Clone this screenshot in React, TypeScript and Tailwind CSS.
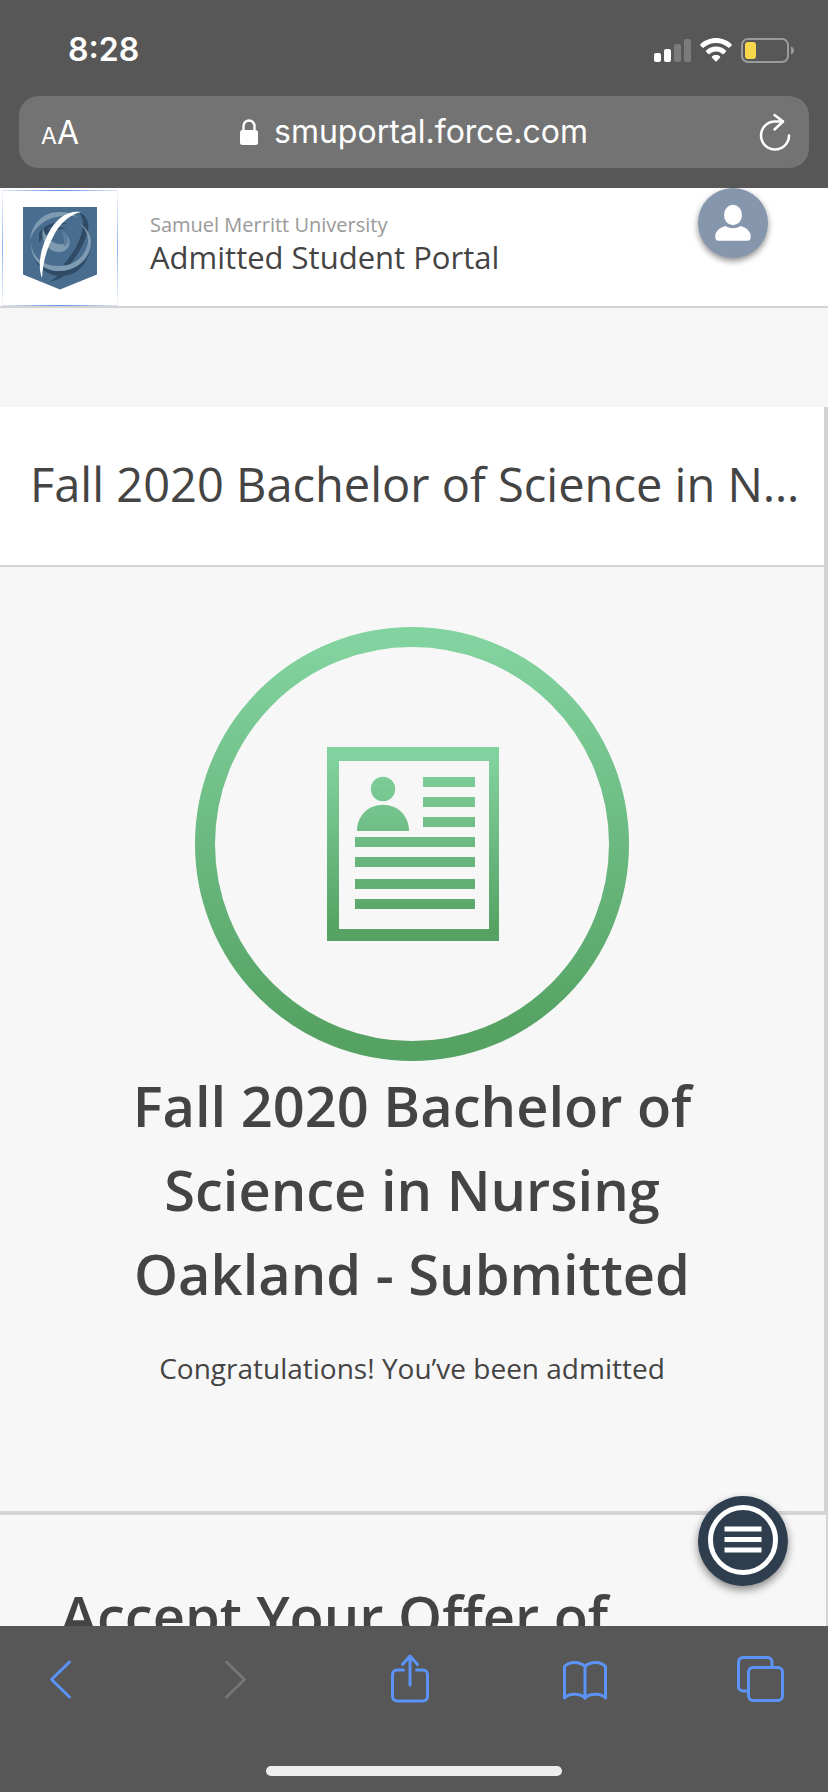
import type { ReactNode } from 'react';

const signalBars = [
    { x: 0, height: 9, on: true },
    { x: 10, height: 13, on: true },
    { x: 20, height: 18, on: false },
    { x: 30, height: 23, on: false },
];

function StatusBar() {
    return (
        <div className="flex h-24 items-center justify-between pt-1 pr-[33px] pl-[68px]">
            <time className="text-[32px] leading-9 font-semibold">8:28</time>
            <div className="flex items-center gap-[9px]">
                <svg width="37" height="23" viewBox="0 0 37 23" aria-label="Signal">
                    {signalBars.map((b) => (
                        <rect
                            key={b.x}
                            x={b.x}
                            y={23 - b.height}
                            width="7"
                            height={b.height}
                            rx="2"
                            fill={b.on ? '#ffffff' : '#7b7b7b'}
                        />
                    ))}
                </svg>
                <svg width="32" height="24" viewBox="0 0 32 24" fill="#ffffff" aria-label="Wi-Fi">
                    <path d="M16 0C22 0 27.500 2.300 31.600 6.200c.4.400.4.900 0 1.300l-2 2.100c-.4.400-.9.400-1.300 0A18 18 0 0 0 16 4.900 18 18 0 0 0 3.700 9.600c-.4.400-.9.400-1.300 0l-2-2.100c-.4-.4-.4-.9 0-1.300C4.500 2.300 10 0 16 0Z" />
                    <path d="M16 8.600c3.800 0 7.200 1.400 9.900 3.800.4.400.4.900 0 1.300l-2.200 2.200c-.4.400-.9.400-1.300 0A9.600 9.600 0 0 0 16 13.500c-2.500 0-4.700.9-6.400 2.400-.4.400-.9.400-1.300 0l-2.200-2.200c-.4-.4-.4-.9 0-1.300A14.800 14.800 0 0 1 16 8.600Z" />
                    <path d="M16 17.100c1.500 0 2.900.5 4 1.400.4.400.4.800 0 1.200l-3.400 3.500c-.4.400-.8.400-1.200 0L12 19.700c-.4-.4-.4-.8 0-1.200 1.100-.9 2.500-1.400 4-1.400Z" />
                </svg>
                <svg width="54" height="25" viewBox="0 0 54 25" aria-label="Battery">
                    <rect x="1" y="1" width="46" height="23" rx="6" fill="none" stroke="#9b9b9b" strokeWidth="2" />
                    <rect x="4" y="4" width="11" height="17" rx="3" fill="#f7d64b" />
                    <path d="M50 8.500c1.900.6 3 2.200 3 4s-1.100 3.400-3 4Z" fill="#9b9b9b" />
                </svg>
            </div>
        </div>
    );
}

function AddressBar() {
    return (
        <div className="mx-[19px] mb-5 flex h-[72px] items-center justify-between rounded-[20px] bg-[#737373] pr-[18px] pl-[22px]">
            <button type="button" aria-label="Text size" className="flex w-7 items-baseline pt-1">
                <span className="text-[23px] leading-10">A</span>
                <span className="text-[32px] leading-10">A</span>
            </button>
            <button type="button" className="flex items-center gap-4">
                <svg width="18" height="26" viewBox="0 0 18 26" aria-hidden="true">
                    <path d="M3.500 12V7a5.500 5.500 0 0 1 11 0v5" fill="none" stroke="#ffffff" strokeWidth="2.400" />
                    <rect y="11" width="18" height="15" rx="2.500" fill="#ffffff" />
                </svg>
                <span className="text-[32px] leading-10">smuportal.force.com</span>
            </button>
            <button type="button" aria-label="Reload">
                <svg
                    width="32"
                    height="38"
                    viewBox="0 0 32 38"
                    fill="none"
                    stroke="#ffffff"
                    strokeWidth="2.500"
                    strokeLinecap="round"
                    strokeLinejoin="round"
                >
                    <path d="M30 22.500a14 14 0 1 1-14-14h8" />
                    <path d="m15.500 2 8.500 6.500-8.500 8" />
                </svg>
            </button>
        </div>
    );
}

function ShieldLogo() {
    return (
        <svg width="74" height="83" viewBox="0 0 74 83" aria-hidden="true">
            <path d="M0 0h74v67.500L37 82.500 0 67.500Z" fill="#486d8e" />
            <path d="M56 5c9 4 12 13 7 25-4 11-10 20-18 30l-5-2c8-9 14-18 17-27 4-11 4-19-1-26Z" fill="#2f4b66" />
            <path d="M67 36c1 18-12 33-29 33-12 0-22-7-27-18 7 10 16 14 27 13 15-1 26-12 29-28Z" fill="#2f4b66" />
            <path d="M16 26c6-9 18-13 29-9-8 0-16 1-21 6 8-3 14-3 20-1-12-1-22 4-28 14Z" fill="#2f4b66" />
            <path d="M26 75c8-2 13-4 18-9l-6-1c-3 4-7 7-12 10Z" fill="#2f4b66" />
            <path d="M7 33C9 15 22 4 38 5c7 0 12 2 17 5-8-2-15-2-22 0C20 13 11 21 7 33Z" fill="#7f9bb1" />
            <path d="M8 37c2 14 13 22 27 22 17 0 28-10 30-24 0-8-3-14-9-19 8 5 12 12 12 20-1 16-14 28-32 28C20 64 8 53 8 37Z" fill="#7f9bb1" />
            <path d="M20 21c-3 13 5 24 16 24 9 0 13-8 9-16 0 6-4 9-9 8-8-1-14-7-16-16Z" fill="#7f9bb1" />
            <path d="M38 24c5 1 8 5 7 11-1 3-3 4-5 4 2-5 1-10-2-15Z" fill="#5d7f9c" />
            <path d="M58 5C45 3 33 11 25 27c-7 14-11 31-6 44 1-15 4-28 11-41C37 16 46 8 58 5Z" fill="#ffffff" />
        </svg>
    );
}

function PortalHeader() {
    return (
        <header className="flex items-start justify-between border-b-2 border-[#d4d4d4] bg-white pr-[60px] pl-0.5">
            <a href="#home" className="flex items-center gap-8">
                <span className="mt-0.5 flex flex-col bg-linear-to-r from-[#5b8fe833] via-[#5b8fe8] to-[#5b8fe833] py-px">
                    <span className="flex bg-linear-to-b from-[#f3f7fe] via-[#8fb3f0] to-[#f3f7fe] px-px">
                        <span className="flex h-[114px] w-[114px] items-center justify-center bg-white">
                            <ShieldLogo />
                        </span>
                    </span>
                </span>
                <span className="flex flex-col pb-2">
                    <span className="text-xl leading-7 text-[#999999]">Samuel Merritt University</span>
                    <span className="text-[31px] leading-9 text-[#444444]">Admitted Student Portal</span>
                </span>
            </a>
            <button
                type="button"
                aria-label="Profile"
                className="rounded-full bg-[#8697ad] shadow-[0_3px_6px_rgba(0,0,0,0.45)]"
            >
                <svg width="70" height="70" viewBox="0 0 70 70" fill="#ffffff">
                    <ellipse cx="35" cy="27" rx="9" ry="10.200" />
                    <path d="M27.500 38c4.700 3 10.300 3 15 0 5.500 1.500 10.200 5 10.200 10.500 0 3-1 4.300-3 4.300H20.300c-2 0-3-1.300-3-4.300C17.300 43 22 39.500 27.500 38Z" />
                </svg>
            </button>
        </header>
    );
}

function ApplicationIcon() {
    return (
        <svg width="434" height="434" viewBox="0 0 434 434" aria-hidden="true">
            <defs>
                <linearGradient id="ring" gradientUnits="userSpaceOnUse" x1="0" y1="0" x2="0" y2="434">
                    <stop offset="0.030" stopColor="#83d3a0" />
                    <stop offset="0.930" stopColor="#55a263" />
                </linearGradient>
                <linearGradient id="sheet" gradientUnits="userSpaceOnUse" x1="0" y1="120" x2="0" y2="314">
                    <stop offset="0.050" stopColor="#82d29f" />
                    <stop offset="0.950" stopColor="#55a263" />
                </linearGradient>
            </defs>
            <circle cx="217" cy="217" r="207" fill="none" stroke="url(#ring)" strokeWidth="20" />
            <g fill="url(#sheet)">
                <path fillRule="evenodd" d="M132 120h172v194H132Zm12 14v168h150V134Z" />
                <circle cx="188" cy="162" r="12.200" />
                <path d="M162 204c0-15 11-26.300 26-26.300S214 189 214 204Z" />
                <path d="M228 150h52v10h-52Zm0 20h52v10h-52Zm0 20h52v10h-52Z" />
                <path d="M160 210h120v10H160Zm0 20h120v10H160Zm0 22h120v10H160Zm0 20h120v10H160Z" />
            </g>
        </svg>
    );
}

function ToolbarButton({ label, disabled, children }: { label: string; disabled?: boolean; children: ReactNode }) {
    return (
        <button
            type="button"
            aria-label={label}
            disabled={disabled}
            className="flex size-12 items-center justify-center text-[#5b93f7] disabled:text-[#757575]"
        >
            <svg
                width="48"
                height="50"
                viewBox="0 0 48 50"
                fill="none"
                stroke="currentColor"
                strokeWidth="3"
                strokeLinecap="round"
                strokeLinejoin="round"
                className="shrink-0"
            >
                {children}
            </svg>
        </button>
    );
}

function BrowserToolbar() {
    return (
        <nav className="flex h-[166px] shrink-0 flex-col items-center justify-between bg-[#575757] pt-[29px] pb-4">
            <div className="flex w-full justify-between pr-11 pl-9">
                <ToolbarButton label="Back">
                    <path d="M33.500 8 15.500 25.500l18 17.500" />
                </ToolbarButton>
                <ToolbarButton label="Forward" disabled>
                    <path d="m15.500 8 18 17.500-18 17.500" />
                </ToolbarButton>
                <ToolbarButton label="Share">
                    <path d="M17.500 16H11a4.500 4.500 0 0 0-4.500 4.500v22A4.500 4.500 0 0 0 11 47h26a4.500 4.500 0 0 0 4.500-4.500v-22A4.500 4.500 0 0 0 37 16h-6.500" />
                    <path d="M24 31V3M16.500 10.500 24 2l7.500 8.500" />
                </ToolbarButton>
                <ToolbarButton label="Bookmarks">
                    <path d="M24 12.500C19 7 8 7 3.500 12.500V44C8 39 19 39 24 44V12.500Z" />
                    <path d="M24 12.500C29 7 40 7 44.500 12.500V44C40 39 29 39 24 44" />
                </ToolbarButton>
                <ToolbarButton label="Tabs">
                    <rect x="12.500" y="13.500" width="34" height="33" rx="4.500" />
                    <path d="M12.500 37H7a4.500 4.500 0 0 1-4.500-4.500V8A4.500 4.500 0 0 1 7 3.500h24.500A4.500 4.500 0 0 1 36 8v5.500" />
                </ToolbarButton>
            </div>
            <div className="h-[10px] w-[296px] rounded-full bg-[#eeeeee]" />
        </nav>
    );
}

export default function App() {
    return (
        <div className="flex h-screen flex-col bg-[#f6f6f6]">
            {/* Browser chrome */}
            <div className="shrink-0 bg-[#575757] font-[Inter,sans-serif] text-white">
                <StatusBar />
                <AddressBar />
            </div>

            {/* Portal page */}
            <div className="relative flex min-h-0 flex-1 flex-col font-['Open_Sans',sans-serif] text-[#444444]">
                <div className="flex-1 overflow-hidden">
                    <PortalHeader />
                    <main className="mt-[99px] bg-[#f7f7f7]">
                        <section className="border-r-4 border-b-4 border-[#d4d4d4]">
                            <div className="border-b-2 border-[#d4d4d4] bg-white pt-[46px] pr-5 pb-[50px] pl-[30px]">
                                <h1 className="truncate text-[47px] leading-[62px]">
                                    Fall 2020 Bachelor of Science in Nursing Oakland
                                </h1>
                            </div>
                            <div className="flex flex-col items-center px-[90px] pt-[60px] pb-[122px] text-center">
                                <ApplicationIcon />
                                <h2 className="mt-0.5 text-[56px] leading-[84px] font-semibold">
                                    Fall 2020 Bachelor of Science in Nursing Oakland - Submitted
                                </h2>
                                <p className="mt-8 text-[28px] leading-[42px]">Congratulations! You’ve been admitted</p>
                            </div>
                        </section>
                        <section className="border-r-2 border-[#d4d4d4] px-[60px] pt-[58px]">
                            <h2 className="text-[56px] leading-[84px] font-semibold">Accept Your Offer of Admission</h2>
                        </section>
                    </main>
                </div>

                {/* Floating menu */}
                <button
                    type="button"
                    aria-label="Menu"
                    className="absolute right-10 bottom-10 rounded-full bg-[#2f3e4e] shadow-[0_4px_8px_rgba(0,0,0,0.45)]"
                >
                    <svg width="90" height="90" viewBox="0 0 90 90">
                        <circle cx="45" cy="44" r="32.500" fill="none" stroke="#ffffff" strokeWidth="5" />
                        <path d="M26.500 30.500h37v5h-37Zm0 10.500h37v5h-37Zm0 10.500h37v5h-37Z" fill="#ffffff" />
                    </svg>
                </button>
            </div>

            <BrowserToolbar />
        </div>
    );
}
